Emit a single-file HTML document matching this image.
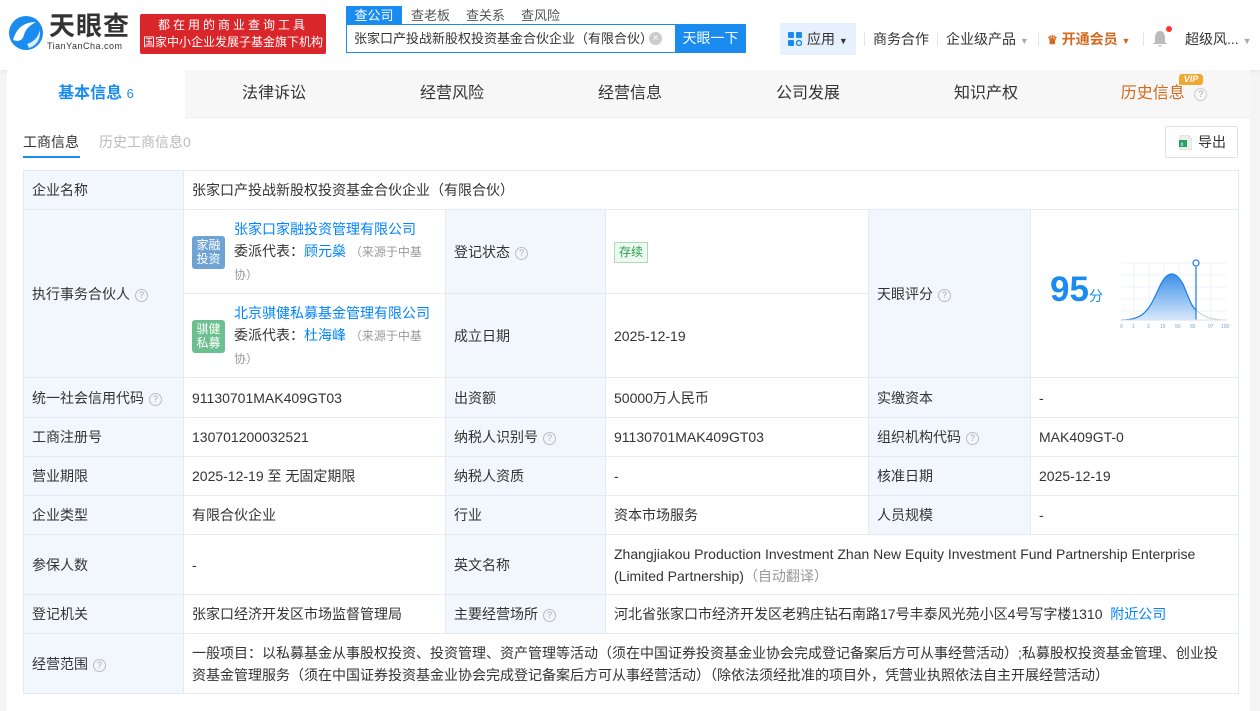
<!DOCTYPE html>
<html><head><meta charset="utf-8">
<style>
*{margin:0;padding:0;box-sizing:border-box}
body{width:1260px;height:711px;overflow:hidden;background:#f5f5f5;font-family:"Liberation Sans","Noto Sans CJK SC",sans-serif;color:#333;font-size:14px;position:relative}
.hdr{position:absolute;left:0;top:0;width:1260px;height:70px;background:#fff;box-shadow:0 2px 4px rgba(0,0,0,.06)}
.abs{position:absolute}
.card{position:absolute;left:7px;top:70px;width:1243px;height:641px;background:#fff}
.tabs{position:absolute;left:0;top:0;width:1243px;height:48px;background:#f7f7f7;border-bottom:1px solid #eee}
.tab{position:absolute;top:0;height:48px;line-height:48px;font-size:16px;color:#333;text-align:center;width:178px}
table{position:absolute;left:16px;top:100px;border-collapse:collapse;table-layout:fixed;width:1215px}
td{border:1px solid #e4eaf2;padding:0 8px;vertical-align:middle;font-size:14px;color:#333;line-height:22px}
td.l{background:#f2f7fd}
.q{display:inline-block;width:13px;height:13px;border:1px solid #bbb;border-radius:50%;font-size:9px;line-height:11px;text-align:center;color:#aaa;margin-left:5px;vertical-align:1px}
.blue{color:#0084ff}
.gray{color:#999}
.badge{position:absolute;left:8px;width:33px;height:33px;border-radius:3px;color:#fff;font-size:12px;line-height:14px;text-align:center;padding-top:2px}
</style></head><body>
<div class="hdr">
  <svg class="abs" style="left:6px;top:13px" width="40" height="40" viewBox="0 0 40 40">
    <circle cx="20" cy="20" r="17" fill="#1a8cf0"/>
    <path d="M7 27 Q12 9 30 9 Q20 14 18 22 Q16 30 7 27Z" fill="#fff"/>
    <path d="M21 31 Q31 28 34 17 Q35 31 23 35Z" fill="#fff" opacity=".85"/>
  </svg>
  <div class="abs" style="left:49px;top:11px;font-size:26px;font-weight:bold;color:#333;letter-spacing:1px;line-height:30px">天眼查</div>
  <div class="abs" style="left:47px;top:41px;font-size:9px;color:#333;letter-spacing:.5px">TianYanCha.com</div>
  <div class="abs" style="left:140px;top:14px;height:40px;background:#d8262b;border-radius:2px;color:#fff;font-size:12px;line-height:17px;text-align:center;padding-top:3px;width:186px"><span style="letter-spacing:3px">都在用的商业查询工具</span><br>国家中小企业发展子基金旗下机构</div>
  <div class="abs" style="left:346px;top:6px;width:56px;height:19px;background:#1a8cf0;color:#fff;font-size:13px;line-height:19px;text-align:center">查公司</div>
  <div class="abs" style="left:411px;top:6px;font-size:13px;line-height:19px;color:#555">查老板</div>
  <div class="abs" style="left:466px;top:6px;font-size:13px;line-height:19px;color:#555">查关系</div>
  <div class="abs" style="left:521px;top:6px;font-size:13px;line-height:19px;color:#555">查风险</div>
  <div class="abs" style="left:346px;top:24px;width:400px;height:29px;border:1px solid #1a8cf0;background:#fff"></div>
  <div class="abs" style="left:354px;top:24px;font-size:13px;line-height:29px;color:#333">张家口产投战新股权投资基金合伙企业（有限合伙）</div>
  <div class="abs" style="left:649px;top:32px;width:13px;height:13px;border-radius:50%;background:#ccc;color:#fff;font-size:10px;line-height:13px;text-align:center">×</div>
  <div class="abs" style="left:675px;top:24px;width:71px;height:29px;background:#1a8cf0;color:#fff;font-size:14px;line-height:29px;text-align:center">天眼一下</div>
  <div class="abs" style="left:780px;top:23px;width:76px;height:32px;background:#e6f1fd;border-radius:2px"></div>
  <svg class="abs" style="left:788px;top:32px" width="14" height="14"><rect x="0" y="0" width="6" height="6" rx="1" fill="#1a8cf0"/><rect x="8" y="0" width="6" height="6" rx="1" fill="#1a8cf0"/><rect x="0" y="8" width="6" height="6" rx="1" fill="#1a8cf0"/><circle cx="11" cy="11" r="2.5" fill="none" stroke="#1a8cf0" stroke-width="1.5"/></svg>
  <div class="abs" style="left:807px;top:23px;font-size:14px;line-height:32px;color:#333">应用 <span style="font-size:9px">▼</span></div>
  <div class="abs" style="left:864px;top:32px;width:1px;height:14px;background:#e5e5e5"></div>
  <div class="abs" style="left:873px;top:23px;font-size:14px;line-height:32px;color:#333">商务合作</div>
  <div class="abs" style="left:937px;top:32px;width:1px;height:14px;background:#e5e5e5"></div>
  <div class="abs" style="left:946px;top:23px;font-size:14px;line-height:32px;color:#333">企业级产品 <span style="font-size:9px;color:#aaa">▼</span></div>
  <div class="abs" style="left:1038px;top:32px;width:1px;height:14px;background:#e5e5e5"></div>
  <div class="abs" style="left:1047px;top:23px;font-size:14px;line-height:32px;color:#d2691e;font-weight:bold"><span style="font-size:12px">♛</span> 开通会员 <span style="font-size:9px">▼</span></div>
  <div class="abs" style="left:1143px;top:32px;width:1px;height:14px;background:#e5e5e5"></div>
  <svg class="abs" style="left:1153px;top:30px" width="14" height="17"><path d="M7 1 C3 1 2 5 2 8 L2 12 L0 14 L14 14 L12 12 L12 8 C12 5 11 1 7 1Z M5 15 L9 15 L7 17Z" fill="#bbb"/></svg>
  <div class="abs" style="left:1166px;top:26px;width:6px;height:6px;border-radius:50%;background:#f33"></div>
  <div class="abs" style="left:1185px;top:23px;font-size:14px;line-height:32px;color:#333">超级风... <span style="font-size:9px;color:#aaa">▼</span></div>
</div>
<div class="card">
  <div class="tabs">
    <div class="tab" style="left:0;background:#fff;color:#1a8cf0;font-weight:bold">基本信息 <span style="font-size:13px;font-weight:normal">6</span></div>
    <div class="tab" style="left:178px">法律诉讼</div>
    <div class="tab" style="left:356px">经营风险</div>
    <div class="tab" style="left:534px">经营信息</div>
    <div class="tab" style="left:712px">公司发展</div>
    <div class="tab" style="left:890px">知识产权</div>
    <div class="tab" style="left:1068px;color:#d2691e">历史信息 <span class="q" style="border-color:#ccc">?</span></div>
    <div class="abs" style="left:1172px;top:4px;width:24px;height:11px;background:#f0a830;border-radius:3px 3px 3px 0;color:#fff;font-size:9px;line-height:11px;text-align:center;font-weight:bold;font-style:italic">VIP</div>
  </div>
  <div class="abs" style="left:16px;top:62px;font-size:14px;color:#333">工商信息</div>
  <div class="abs" style="left:16px;top:86px;width:57px;height:2px;background:#1a8cf0"></div>
  <div class="abs" style="left:92px;top:62px;font-size:14px;color:#bbb">历史工商信息0</div>
  <div class="abs" style="left:1158px;top:56px;width:73px;height:32px;border:1px solid #e2e2e2;border-radius:2px"></div>
  <svg class="abs" style="left:1172px;top:65px" width="13" height="15"><path d="M1 0 L9 0 L13 4 L13 15 L1 15Z" fill="#eee" stroke="#ddd"/><rect x="0" y="5" width="8" height="7" fill="#21a366"/><text x="1.5" y="11" font-size="6" fill="#fff" font-family="Liberation Sans">x</text></svg>
  <div class="abs" style="left:1191px;top:56px;font-size:14px;line-height:32px;color:#333">导出</div>
  <table>
    <colgroup><col style="width:160px"><col style="width:262px"><col style="width:160px"><col style="width:263px"><col style="width:162px"><col style="width:208px"></colgroup>
    <tr style="height:39px"><td class="l">企业名称</td><td colspan="5">张家口产投战新股权投资基金合伙企业（有限合伙）</td></tr>
    <tr style="height:84px"><td class="l" rowspan="2">执行事务合伙人<span class="q">?</span></td>
      <td style="position:relative;padding-left:50px"><div class="badge" style="top:26px;background:#6fa3d4">家融<br>投资</div><span class="blue">张家口家融投资管理有限公司</span><br>委派代表：<span class="blue">顾元燊</span> <span class="gray" style="font-size:12px">（来源于中基<br>协）</span></td>
      <td class="l">登记状态<span class="q">?</span></td>
      <td><span style="display:inline-block;border:1px solid #a8deb5;background:#eefaf1;color:#2d9b50;font-size:12px;line-height:19px;padding:0 4px;margin-top:-4px">存续</span></td>
      <td class="l" rowspan="2">天眼评分<span class="q">?</span></td>
      <td rowspan="2" style="position:relative;padding:0">
        <div class="abs" style="left:19px;top:60px;font-size:35px;font-weight:bold;color:#1a8cf0;line-height:40px">95<span style="font-size:14px;font-weight:normal">分</span></div>
        <svg class="abs" style="left:88px;top:48px" width="110" height="72" viewBox="0 0 110 72">
          <defs><linearGradient id="g" x1="0" y1="0" x2="0" y2="1"><stop offset="0" stop-color="#3b8fe8"/><stop offset="1" stop-color="#d8e9fb"/></linearGradient></defs>
          <g stroke="#eef2f7" stroke-width="1"><line x1="2" y1="5" x2="108" y2="5"/><line x1="2" y1="17" x2="108" y2="17"/><line x1="2" y1="29" x2="108" y2="29"/><line x1="2" y1="41" x2="108" y2="41"/><line x1="2" y1="53" x2="108" y2="53"/><line x1="15" y1="5" x2="15" y2="62"/><line x1="30" y1="5" x2="30" y2="62"/><line x1="45" y1="5" x2="45" y2="62"/><line x1="60" y1="5" x2="60" y2="62"/><line x1="75" y1="5" x2="75" y2="62"/><line x1="92" y1="5" x2="92" y2="62"/></g>
          <path d="M2 62 C25 62 30 52 40 30 C48 12 56 12 64 26 C70 40 72 48 77 52 L77 62Z" fill="url(#g)"/>
          <path d="M2 62 C25 62 30 52 40 30 C48 12 56 12 64 26 C70 40 72 48 77 52" fill="none" stroke="#1a7de0" stroke-width="1.2"/>
          <path d="M77 52 C85 60 95 62 108 62" fill="none" stroke="#ccc" stroke-width="1"/>
          <line x1="77" y1="6" x2="77" y2="62" stroke="#1a7de0" stroke-width="1.2"/>
          <circle cx="77" cy="5" r="3" fill="#fff" stroke="#1a7de0" stroke-width="1.2"/>
          <line x1="2" y1="62" x2="108" y2="62" stroke="#dde" />
          <text y="70" font-size="5" fill="#7aa7d8" font-family="Liberation Sans"><tspan x="1">0</tspan><tspan x="13">1</tspan><tspan x="28">3</tspan><tspan x="41">15</tspan><tspan x="56">50</tspan><tspan x="71">85</tspan><tspan x="89">97</tspan><tspan x="102">100</tspan></text>
        </svg>
      </td></tr>
    <tr style="height:84px">
      <td style="position:relative;padding-left:50px"><div class="badge" style="top:26px;background:#6cbf8f">骐健<br>私募</div><span class="blue">北京骐健私募基金管理有限公司</span><br>委派代表：<span class="blue">杜海峰</span> <span class="gray" style="font-size:12px">（来源于中基<br>协）</span></td>
      <td class="l">成立日期</td><td>2025-12-19</td></tr>
    <tr style="height:40px"><td class="l">统一社会信用代码<span class="q">?</span></td><td>91130701MAK409GT03</td><td class="l">出资额</td><td>50000万人民币</td><td class="l">实缴资本</td><td>-</td></tr>
    <tr style="height:39px"><td class="l">工商注册号</td><td>130701200032521</td><td class="l">纳税人识别号<span class="q">?</span></td><td>91130701MAK409GT03</td><td class="l">组织机构代码<span class="q">?</span></td><td>MAK409GT-0</td></tr>
    <tr style="height:39px"><td class="l">营业期限</td><td>2025-12-19 至 无固定期限</td><td class="l">纳税人资质</td><td>-</td><td class="l">核准日期</td><td>2025-12-19</td></tr>
    <tr style="height:39px"><td class="l">企业类型</td><td>有限合伙企业</td><td class="l">行业</td><td>资本市场服务</td><td class="l">人员规模</td><td>-</td></tr>
    <tr style="height:60px"><td class="l">参保人数</td><td>-</td><td class="l">英文名称</td><td colspan="3">Zhangjiakou Production Investment Zhan New Equity Investment Fund Partnership Enterprise (Limited Partnership)<span class="gray">（自动翻译）</span></td></tr>
    <tr style="height:39px"><td class="l">登记机关</td><td>张家口经济开发区市场监督管理局</td><td class="l">主要经营场所<span class="q">?</span></td><td colspan="3">河北省张家口市经济开发区老鸦庄钻石南路17号丰泰风光苑小区4号写字楼1310 &nbsp;<span class="blue">附近公司</span></td></tr>
    <tr style="height:60px"><td class="l">经营范围<span class="q">?</span></td><td colspan="5">一般项目：以私募基金从事股权投资、投资管理、资产管理等活动（须在中国证券投资基金业协会完成登记备案后方可从事经营活动）;私募股权投资基金管理、创业投资基金管理服务（须在中国证券投资基金业协会完成登记备案后方可从事经营活动）（除依法须经批准的项目外，凭营业执照依法自主开展经营活动）</td></tr>
  </table>
</div>
</body></html>
